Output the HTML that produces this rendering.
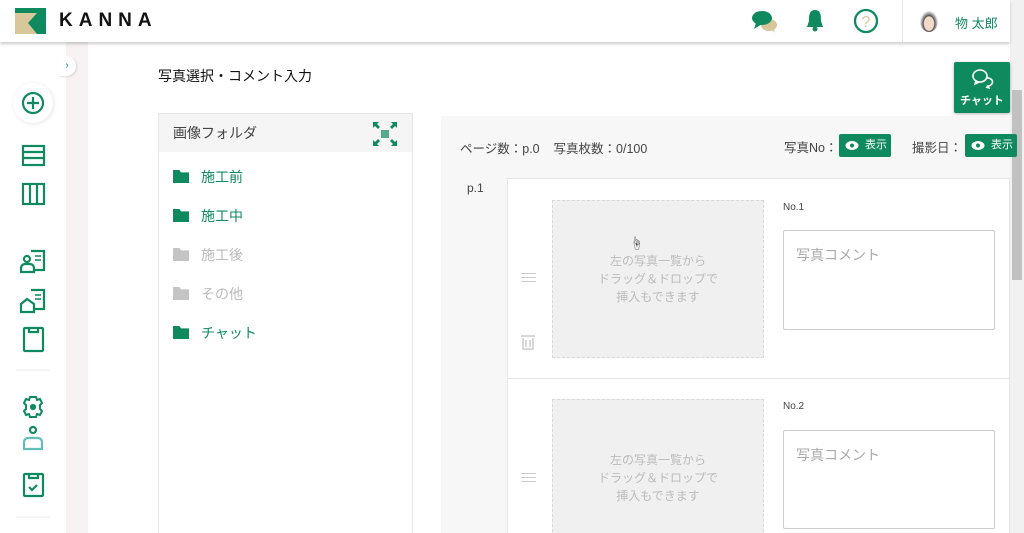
<!DOCTYPE html>
<html style="overflow:hidden;width:1024px;height:533px"><head><meta charset="utf-8"><style>
*{box-sizing:border-box;margin:0;padding:0}
body{width:1024px;height:533px;overflow:hidden;background:#fff;font-family:"Liberation Sans","Noto Sans CJK JP",sans-serif;position:relative;color:#333}
.abs{position:absolute}
.g{color:#0f8a5f}
.fd{display:inline-block;width:16px;height:13px;margin-right:12px;vertical-align:-1px;clip-path:polygon(0 0,40% 0,50% 18%,100% 18%,100% 100%,0 100%)}
</style></head><body>
<!-- header -->
<div class="abs" style="left:0;top:0;width:1010px;height:42px;background:#fff;box-shadow:0 2px 3px rgba(0,0,0,.2);z-index:5">
  <svg class="abs" style="left:15px;top:8px" width="31" height="26"><rect width="31" height="26" fill="#0f8a5f"/><polygon points="0,5 22,5 13,15 22,26 0,26" fill="#d8c79a"/></svg>
  <div class="abs" style="left:59px;top:10px;font-size:19px;font-weight:bold;letter-spacing:6px;color:#111">KANNA</div>
  <svg class="abs" style="left:751px;top:9px" width="27" height="24"><ellipse cx="18" cy="16" rx="8" ry="6" fill="#d8c79a"/><polygon points="20,20 24,24 22,18" fill="#d8c79a"/><ellipse cx="11" cy="9" rx="10" ry="7" fill="#0f8a5f"/><polygon points="5,14 3,20 11,15" fill="#0f8a5f"/></svg>
  <svg class="abs" style="left:805px;top:8px" width="20" height="25"><path d="M10 2 C4 2 4 8 4 13 L2 19 L18 19 L16 13 C16 8 16 2 10 2Z" fill="#0f8a5f"/><circle cx="10" cy="21" r="2.5" fill="#0f8a5f"/></svg>
  <svg class="abs" style="left:853px;top:8px" width="26" height="26"><circle cx="13" cy="13" r="11" fill="none" stroke="#0f8a5f" stroke-width="2.3"/><text x="13" y="19" font-size="16" text-anchor="middle" fill="#d8c79a" font-family="Liberation Sans">?</text></svg>
  <div class="abs" style="left:902px;top:0;width:1px;height:42px;background:#e5e5e5"></div>
  <div class="abs" style="left:920px;top:11px;width:18px;height:21px;border-radius:50%;background:radial-gradient(ellipse at 50% 60%,#f3d9c8 38%,#555 44%,#eee 70%)"></div>
  <div class="abs g" style="left:955px;top:13px;font-size:13px">物 太郎</div>
</div>
<!-- scrollbar -->
<div class="abs" style="left:1010px;top:0;width:14px;height:533px;background:#f1f1f1"></div>
<div class="abs" style="left:1012px;top:90px;width:10px;height:190px;background:#c1c1c1"></div>
<!-- sidebar -->
<div class="abs" style="left:66px;top:42px;width:22px;height:491px;background:#f8f2f2"></div>
<div class="abs" style="left:58px;top:56px;width:18px;height:20px;border-radius:0 10px 10px 0;background:#fff;box-shadow:1px 1px 2px rgba(0,0,0,.12);font-size:10px;color:#0f8a5f;text-align:center;line-height:20px">›</div>
<div class="abs" style="left:13px;top:83px;width:40px;height:40px;border-radius:50%;background:#fff;box-shadow:1px 1px 4px rgba(0,0,0,.1)"></div>
<svg class="abs" style="left:0;top:42px" width="66" height="491" fill="none" stroke="#0f8a5f" stroke-width="2.2">
 <circle cx="33" cy="61" r="10"/><path d="M33 55v12M27 61h12"/>
 <rect x="23" y="104" width="21" height="19"/><path d="M23 110h21M23 116h21"/>
 <rect x="23" y="142" width="21" height="20"/><path d="M30 142v20M37 142v20"/>
 <path d="M31 209h13v19h-9" /><path d="M35 214h6M35 218h6" stroke-width="1.5"/><circle cx="27" cy="217" r="3"/><path d="M21 230v-4a4 4 0 0 1 4-4h5a4 4 0 0 1 4 4v4z"/>
 <path d="M31 248h13v19h-9"/><path d="M35 253h6M35 257h6" stroke-width="1.5"/><path d="M21 270v-8l6-5 7 5v8z"/>
 <rect x="24" y="286" width="19" height="23" rx="1"/><path d="M29 286v4h9v-4"/>
 <path d="M16 328h34" stroke="#e8e8e8" stroke-width="1"/>
 <path d="M30 355h6l1 3 3-1 2 4-2 2v4l2 2-2 4-3-1-1 3h-6l-1-3-3 1-2-4 2-2v-4l-2-2 2-4 3 1z" stroke-width="2"/><circle cx="33" cy="365" r="2" fill="#0f8a5f"/>
 <circle cx="33" cy="388" r="3"/><path d="M24 407v-7a4 4 0 0 1 4-4h10a4 4 0 0 1 4 4v7z" stroke="#6bb"/>
 <rect x="24" y="432" width="19" height="22" rx="1"/><path d="M29 432v4h9v-4M29 445l3 3 5-5"/>
 <path d="M16 475h34" stroke="#e8e8e8" stroke-width="1"/>
</svg>
<!-- title -->
<div class="abs" style="left:158px;top:66px;font-size:14px;color:#111">写真選択・コメント入力</div>
<!-- chat btn -->
<div class="abs" style="left:954px;top:62px;width:56px;height:51px;background:#0f8a5f;border-radius:2px;box-shadow:0 1px 3px rgba(0,0,0,.3)">
 <svg class="abs" style="left:16px;top:5px" width="24" height="22" fill="none" stroke="#fff" stroke-width="1.6"><ellipse cx="10" cy="9" rx="7" ry="6"/><path d="M6 14l-1 3 4-2"/><path d="M17 11a5 4 0 0 1 1 8l1 2-3-1"/></svg>
 <div class="abs" style="left:0;top:30px;width:56px;text-align:center;color:#fff;font-size:11px;font-weight:bold">チャット</div>
</div>
<!-- folder panel -->
<div class="abs" style="left:158px;top:113px;width:255px;height:430px;border:1px solid #e6e6e6;background:#fff">
 <div style="height:38px;background:#f5f5f5;padding:9px 14px;font-size:14px;color:#444">画像フォルダ</div>
 <svg class="abs" style="left:214px;top:8px" width="24" height="24" fill="#0f8a5f"><rect x="8" y="8" width="8" height="8" opacity=".7"/><path d="M0 0h6l-2 2 3 3-2 2-3-3-2 2zM24 0h-6l2 2-3 3 2 2 3-3 2 2zM0 24h6l-2-2 3-3-2-2-3 3-2-2zM24 24h-6l2-2-3-3 2-2 3 3 2-2z"/></svg>
</div>
<div class="abs" style="left:173px;top:169px;font-size:14px;line-height:16px">
 <div class="g" style="height:39px"><span class="fd" style="background:#0f8a5f"></span>施工前</div>
 <div class="g" style="height:39px"><span class="fd" style="background:#0f8a5f"></span>施工中</div>
 <div style="height:39px;color:#bbb"><span class="fd" style="background:#c4c4c4"></span>施工後</div>
 <div style="height:39px;color:#bbb"><span class="fd" style="background:#c4c4c4"></span>その他</div>
 <div class="g" style="height:39px"><span class="fd" style="background:#0f8a5f"></span>チャット</div>
</div>
<!-- right panel -->
<div class="abs" style="left:441px;top:116px;width:569px;height:417px;background:#f7f7f7"></div>
<div class="abs" style="left:460px;top:138px;font-size:12.5px;color:#444">ページ数：p.0&nbsp;&nbsp;&nbsp;&nbsp;写真枚数：0/100</div>
<div class="abs" style="left:784px;top:137px;font-size:12.5px;color:#444">写真No：</div>
<div class="abs" style="left:839px;top:134px;width:52px;height:23px;background:#0f8a5f;border-radius:2px;color:#fff;font-size:11px;line-height:23px;padding-left:26px">表示</div>
<svg class="abs" style="left:845px;top:140px" width="14" height="11"><ellipse cx="7" cy="5.5" rx="6.5" ry="4.5" fill="#fff"/><circle cx="7" cy="5.5" r="2" fill="#0f8a5f"/></svg>
<div class="abs" style="left:912px;top:137px;font-size:12.5px;color:#444">撮影日：</div>
<div class="abs" style="left:965px;top:134px;width:52px;height:23px;background:#0f8a5f;border-radius:2px;color:#fff;font-size:11px;line-height:23px;padding-left:26px">表示</div>
<svg class="abs" style="left:971px;top:140px" width="14" height="11"><ellipse cx="7" cy="5.5" rx="6.5" ry="4.5" fill="#fff"/><circle cx="7" cy="5.5" r="2" fill="#0f8a5f"/></svg>
<div class="abs" style="left:467px;top:181px;font-size:12px;color:#444">p.1</div>
<div class="abs" style="left:507px;top:178px;width:503px;height:360px;background:#fff;border:1px solid #e6e6e6"></div>
<div class="abs" style="left:507px;top:378px;width:503px;height:1px;background:#e6e6e6"></div>
<!-- row1 -->
<div class="abs" style="left:552px;top:200px;width:212px;height:158px;background:#f0f0f0;border:1px dashed #d8d8d8;text-align:center;font-size:12px;line-height:18px;color:#bbb;padding-top:51px">左の写真一覧から<br>ドラッグ＆ドロップで<br>挿入もできます</div>
<div class="abs" style="left:630px;top:233px;font-size:13px;color:#444">☝</div>
<div class="abs" style="left:521px;top:273px;width:15px;height:9px;border-top:1px solid #ccc;border-bottom:1px solid #ccc"></div>
<div class="abs" style="left:521px;top:277px;width:15px;height:1px;background:#ccc"></div>
<svg class="abs" style="left:520px;top:334px" width="16" height="17" fill="none" stroke="#ccc" stroke-width="1.5"><path d="M1 2h14M3 4v11h10V4M6 6v7M10 6v7"/></svg>
<div class="abs" style="left:783px;top:202px;font-size:10px;color:#444">No.1</div>
<div class="abs" style="left:783px;top:230px;width:212px;height:100px;border:1px solid #ccc;border-radius:2px;padding:14px 12px;font-size:14px;color:#aaa">写真コメント</div>
<!-- row2 -->
<div class="abs" style="left:552px;top:399px;width:212px;height:158px;background:#f0f0f0;border:1px dashed #d8d8d8;text-align:center;font-size:12px;line-height:18px;color:#bbb;padding-top:51px">左の写真一覧から<br>ドラッグ＆ドロップで<br>挿入もできます</div>
<div class="abs" style="left:521px;top:473px;width:15px;height:9px;border-top:1px solid #ccc;border-bottom:1px solid #ccc"></div>
<div class="abs" style="left:521px;top:477px;width:15px;height:1px;background:#ccc"></div>
<div class="abs" style="left:783px;top:401px;font-size:10px;color:#444">No.2</div>
<div class="abs" style="left:783px;top:430px;width:212px;height:99px;border:1px solid #ccc;border-radius:2px;padding:14px 12px;font-size:14px;color:#aaa">写真コメント</div>
</body></html>
